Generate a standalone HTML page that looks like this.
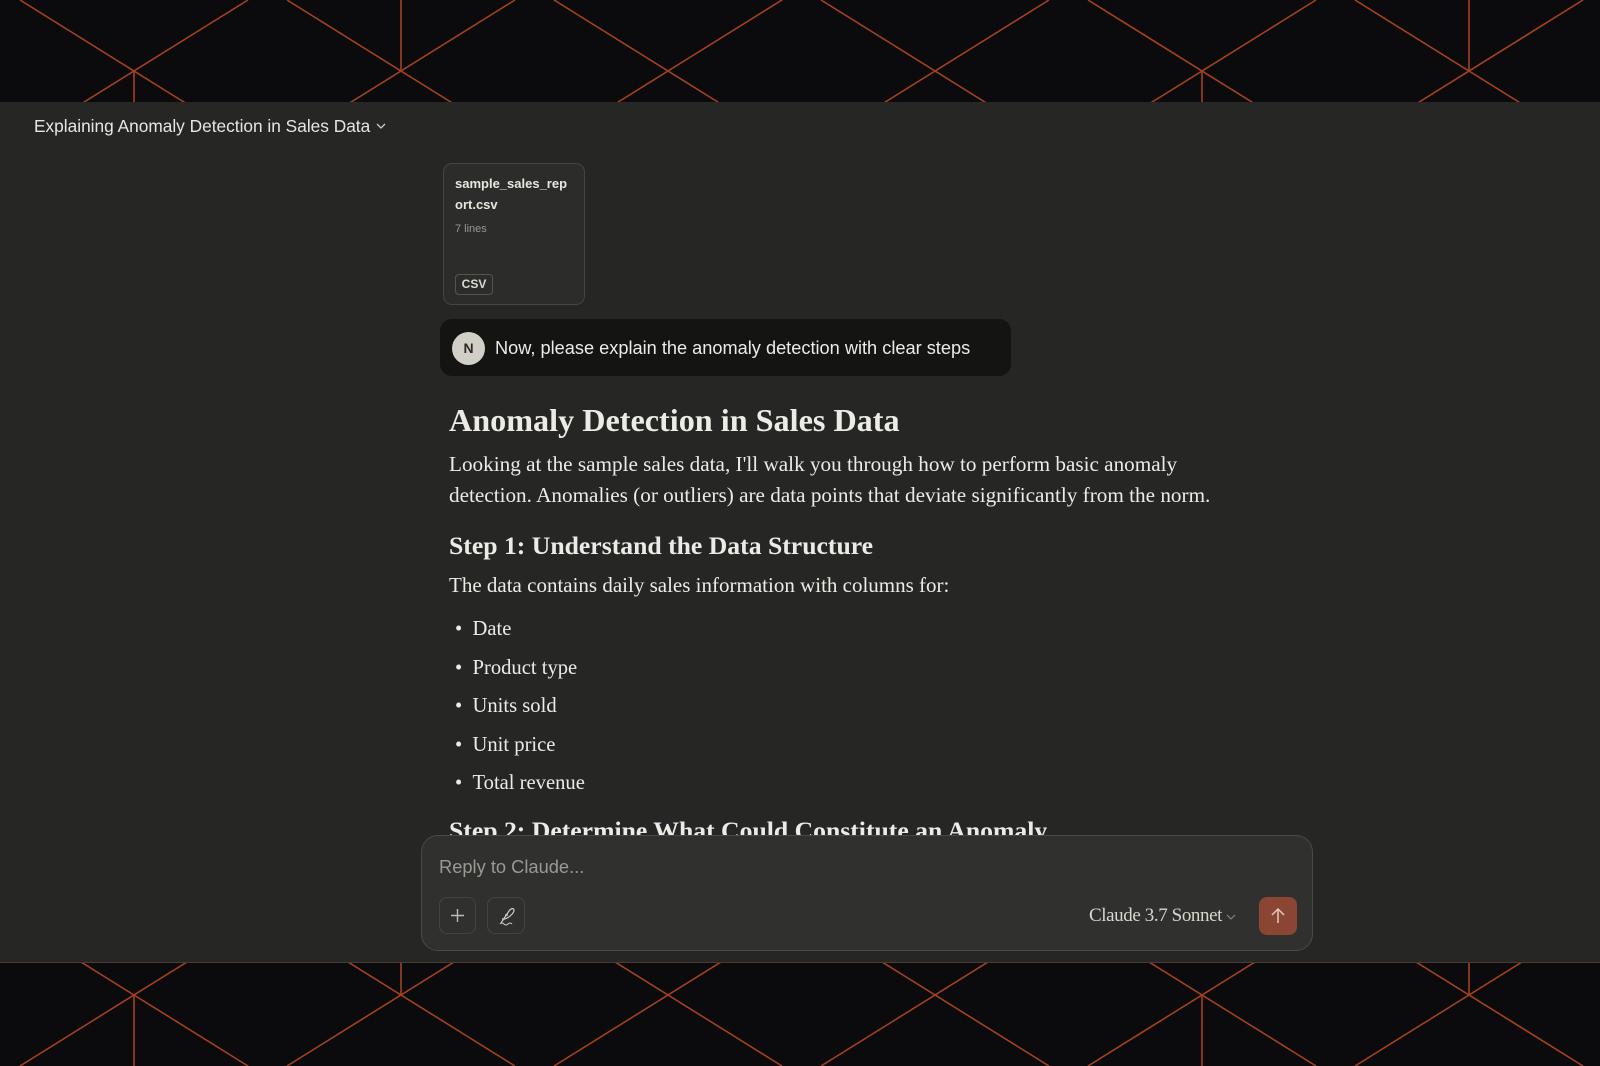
<!DOCTYPE html>
<html><head><meta charset="utf-8"><style>
*{margin:0;padding:0;box-sizing:border-box}
body{width:1600px;height:1066px;overflow:hidden;background:#0b0b0d;position:relative;font-family:"Liberation Sans",sans-serif}
.band{position:absolute;left:0;width:1600px}
#main{position:absolute;left:0;top:102px;width:1600px;height:861px;background:#262624;border-bottom:1px solid #4a3a32}
.t{position:absolute;white-space:nowrap;color:#ecebe5}
.serif{font-family:"Liberation Serif",serif}
#clip{position:absolute;left:0;top:0;width:1600px;height:733px;overflow:hidden}
</style></head><body>
<svg class="band" style="top:0" width="1600" height="102" viewBox="0 0 1600 102">
<g stroke="#a3401f" stroke-width="1.6" fill="none">
<path d="M20 0 L248 142 M248 0 L20 142"/>
<path d="M287 0 L515 142 M515 0 L287 142"/>
<path d="M554 0 L782 142 M782 0 L554 142"/>
<path d="M821 0 L1049 142 M1049 0 L821 142"/>
<path d="M1088 0 L1316 142 M1316 0 L1088 142"/>
<path d="M1355 0 L1583 142 M1583 0 L1355 142"/>
<path d="M134 71 V102 M401 0 V71 M1202 71 V102 M1469 0 V71"/>
</g></svg>
<svg class="band" style="top:963px" width="1600" height="103" viewBox="0 963 1600 103">
<g stroke="#a3401f" stroke-width="1.6" fill="none">
<path d="M20 924 L248 1066 M248 924 L20 1066"/>
<path d="M287 924 L515 1066 M515 924 L287 1066"/>
<path d="M554 924 L782 1066 M782 924 L554 1066"/>
<path d="M821 924 L1049 1066 M1049 924 L821 1066"/>
<path d="M1088 924 L1316 1066 M1316 924 L1088 1066"/>
<path d="M1355 924 L1583 1066 M1583 924 L1355 1066"/>
<path d="M134 995 V1066 M401 963 V995 M1202 995 V1066 M1469 963 V995"/>
</g></svg>
<div id="main">
<div class="t" style="left:34px;top:13px;font-size:17.3px;line-height:22px;color:#e8e6df">Explaining Anomaly Detection in Sales Data <svg width="12" height="10" viewBox="0 0 12 10" style="vertical-align:1px"><path d="M2 3 L6 7 L10 3" stroke="#ccc" stroke-width="1.3" fill="none"/></svg></div>
<div style="position:absolute;left:443px;top:61px;width:142px;height:142px;border:1px solid #45443f;border-radius:9px;background:#2c2c2a"></div>
<div class="t" style="left:455px;top:71px;font-size:13px;line-height:21px;font-weight:bold;color:#e8e6df">sample_sales_rep<br>ort.csv</div>
<div class="t" style="left:455px;top:121px;font-size:11px;color:#9a988f">7 lines</div>
<div class="t" style="left:455px;top:172px;width:38px;height:21px;border:1px solid #55544e;border-radius:4px;font-size:12px;font-weight:bold;line-height:19px;text-align:center;color:#dcdad2">CSV</div>
<div style="position:absolute;left:440px;top:217px;width:571px;height:57px;background:#141413;border-radius:12px"></div>
<div style="position:absolute;left:452px;top:230px;width:33px;height:33px;border-radius:50%;background:#d2d0c6;color:#2a2a28;font-size:14px;font-weight:bold;text-align:center;line-height:33px">N</div>
<div class="t" style="left:495px;top:235px;font-size:18.2px;line-height:22px">Now, please explain the anomaly detection with clear steps</div>
<div id="clip">
<div class="t serif" style="left:449px;top:300px;font-size:32.2px;font-weight:bold;line-height:36px">Anomaly Detection in Sales Data</div>
<div class="t serif" style="left:449px;top:347px;font-size:21.2px;line-height:31px">Looking at the sample sales data, I'll walk you through how to perform basic anomaly<br>detection. Anomalies (or outliers) are data points that deviate significantly from the norm.</div>
<div class="t serif" style="left:449px;top:429px;font-size:25.7px;font-weight:bold;line-height:30px">Step 1: Understand the Data Structure</div>
<div class="t serif" style="left:449px;top:470px;font-size:21px;line-height:26px">The data contains daily sales information with columns for:</div>
<div class="t serif" style="left:455px;top:508px;font-size:20.6px;line-height:38.5px">•&nbsp;&nbsp;Date<br>•&nbsp;&nbsp;Product type<br>•&nbsp;&nbsp;Units sold<br>•&nbsp;&nbsp;Unit price<br>•&nbsp;&nbsp;Total revenue</div>
<div class="t serif" style="left:449px;top:714px;font-size:25.7px;font-weight:bold;line-height:30px">Step 2: Determine What Could Constitute an Anomaly</div>
</div>
<div style="position:absolute;left:421px;top:733px;width:892px;height:116px;background:#30302e;border:1px solid #4a4946;border-radius:17px"></div>
<div class="t" style="left:439px;top:754px;font-size:18.3px;line-height:22px;color:#9b9992">Reply to Claude...</div>
<div style="position:absolute;left:439px;top:795px;width:37px;height:37px;border:1px solid #444340;border-radius:8px"><svg width="35" height="35" viewBox="0 0 35 35"><path d="M17.5 11 V24 M11 17.5 H24" stroke="#bbb" stroke-width="1.4"/></svg></div>
<div style="position:absolute;left:487px;top:795px;width:38px;height:37px;border:1px solid #444340;border-radius:8px"><svg width="36" height="35" viewBox="0 0 36 35"><path d="M13 25 L21 13 C23 10 26 10 26 12 C26 15 22 19 17 21 L14 21 M17 17 L20 17" stroke="#ccc" stroke-width="1.2" fill="none"/><path d="M12 26 Q14 24 16 26 Q18 28 20 26 Q22 24 24 26" stroke="#ccc" stroke-width="1" fill="none"/></svg></div>
<div class="t serif" style="left:1089px;top:803px;font-size:19px;line-height:22px;letter-spacing:-0.4px;color:#d8d6ce">Claude 3.7 Sonnet <svg width="10" height="8" viewBox="0 0 10 8"><path d="M1 2 L5 6 L9 2" stroke="#888" stroke-width="1.1" fill="none"/></svg></div>
<div style="position:absolute;left:1259px;top:795px;width:38px;height:38px;border-radius:8px;background:#8a4633"><svg width="38" height="38" viewBox="0 0 38 38"><path d="M19 26 V12 M13 18 L19 12 L25 18" stroke="#e5c9bd" stroke-width="1.5" fill="none"/></svg></div>
</div>
</body></html>
